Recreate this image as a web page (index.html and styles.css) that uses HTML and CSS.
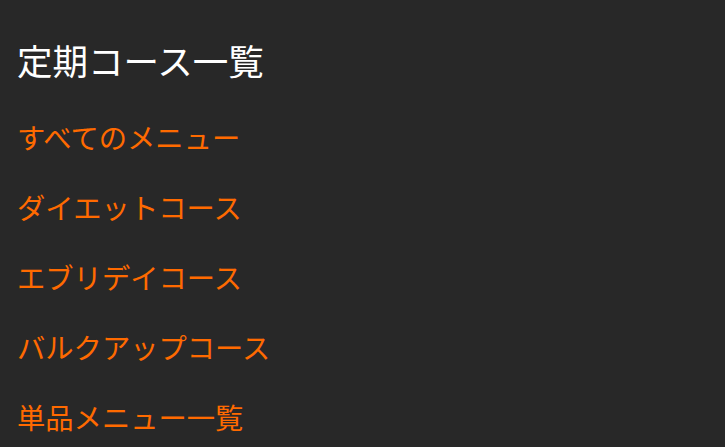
FILE: index.html
```html
<!DOCTYPE html>
<html lang="ja">
<head>
  <meta charset="UTF-8">
  <meta name="viewport" content="width=device-width, initial-scale=1.0">
  <title>定期コース一覧</title>
  <link rel="stylesheet" href="styles.css">
</head>
<body>
  <div class="course-list">
    <h1 class="course-title">定期コース一覧</h1>
    <ul class="menu">
      <li><a href="#">すべてのメニュー</a></li>
      <li><a href="#">ダイエットコース</a></li>
      <li><a href="#">エブリデイコース</a></li>
      <li><a href="#">バルクアップコース</a></li>
      <li><a href="#">単品メニュー一覧</a></li>
    </ul>
  </div>
</body>
</html>
```

FILE: styles.css
```css
body {
  background-color: #282828;
  color: #fff;
  font-family: "Noto Sans CJK JP", "Noto Sans", sans-serif;
  margin: 0;
  height: 100vh;
  overflow: hidden;
}

.course-list {
  padding: 40px 17px 0;
}

.course-title {
  font-size: 35.5px;
  font-weight: normal;
  line-height: 40px;
  margin: 0 0 22px;
}

.menu {
  list-style: none;
  margin: 0;
  padding: 0;
}

.menu a {
  display: block;
  color: #ff6a00;
  font-size: 28.3px;
  line-height: 70px;
  text-decoration: none;
}
```
